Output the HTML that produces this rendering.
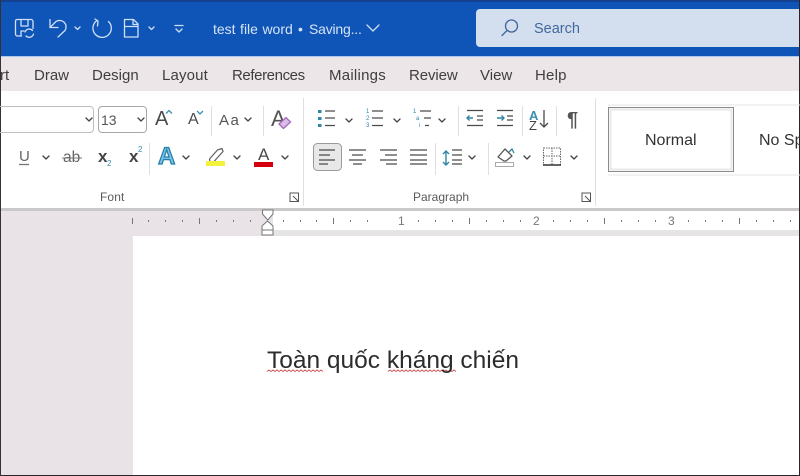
<!DOCTYPE html>
<html><head><meta charset="utf-8">
<style>
html,body{margin:0;padding:0;background:#fff}
#p{position:relative;width:800px;height:476px;overflow:hidden;background:#fff;font-family:"Liberation Sans",sans-serif;filter:blur(.35px)}
.a{position:absolute}
.t{position:absolute;white-space:nowrap;line-height:1}
.tab{top:68px;font-size:15px;color:#3f3d3f}
svg{position:absolute;left:0;top:0}
</style></head><body>
<div id="p">
<div class="a" style="left:0;top:0;width:800px;height:56px;background:#0f55b7"></div>
<div class="a" style="left:0;top:0;width:800px;height:2px;background:#14408f"></div>
<div class="a" style="left:0;top:56px;width:800px;height:1px;background:#a9c8ee"></div>
<div class="a" style="left:0;top:57px;width:800px;height:34px;background:#ece6e9"></div>
<div class="a" style="left:0;top:91px;width:800px;height:117px;background:#fff"></div>
<div class="a" style="left:0;top:208px;width:800px;height:3px;background:#cbc8ca"></div>
<div class="a" style="left:0;top:211px;width:800px;height:265px;background:#e9e3e7"></div>
<div class="a" style="left:133px;top:236px;width:667px;height:240px;background:#fff"></div>
<div class="a" style="left:273px;top:211px;width:527px;height:19px;background:#fff"></div>
<div class="a" style="left:273px;top:230px;width:527px;height:6px;background:#e7e4e6"></div>
<div class="a" style="left:476px;top:9px;width:330px;height:38px;border-radius:4px;background:#d3dfef"></div>
<div class="a" style="left:0;top:475px;width:800px;height:1px;background:#2a2528"></div>
<div class="a" style="left:0;top:0;width:1px;height:476px;background:#3a3034"></div>
<div class="a" style="left:799px;top:0;width:1px;height:476px;background:#2a2528"></div>

<div class="t" style="left:213px;top:22px;font-size:14px;color:#d5e3f6;word-spacing:.6px">test file word</div>
<div class="t" style="left:298px;top:22px;font-size:14px;color:#d5e3f6">•</div>
<div class="t" style="left:309px;top:22px;font-size:14px;color:#d5e3f6;letter-spacing:-.2px">Saving...</div>
<div class="t" style="left:534px;top:22px;font-size:14.5px;color:#41689c">Search</div>

<div class="t tab" style="left:0">rt</div>
<div class="t tab" style="left:34px">Draw</div>
<div class="t tab" style="left:92px">Design</div>
<div class="t tab" style="left:162px;letter-spacing:.15px">Layout</div>
<div class="t tab" style="left:232px;letter-spacing:-.4px">References</div>
<div class="t tab" style="left:329px;letter-spacing:.25px">Mailings</div>
<div class="t tab" style="left:409px;letter-spacing:-.1px">Review</div>
<div class="t tab" style="left:480px">View</div>
<div class="t tab" style="left:535px;letter-spacing:.2px">Help</div>

<div class="a" style="left:-6px;top:106px;width:100px;height:27px;border:1px solid #c0bdbf;border-radius:4px;box-sizing:border-box"></div>
<div class="a" style="left:98px;top:106px;width:49px;height:27px;border:1px solid #aaa7a9;border-radius:4px;box-sizing:border-box"></div>
<div class="t" style="left:101px;top:113px;font-size:14px;color:#555">13</div>

<div class="t" style="left:155px;top:109px;font-size:20px;color:#4a4a4a">A</div>
<div class="t" style="left:188px;top:112px;font-size:16px;color:#4a4a4a">A</div>
<div class="t" style="left:219px;top:113px;font-size:15px;color:#555;letter-spacing:1.5px">Aa</div>
<div class="t" style="left:271px;top:108px;font-size:22px;color:#555">A</div>
<div class="t" style="left:19px;top:149px;font-size:15px;color:#666">U</div>
<div class="t" style="left:63px;top:150px;font-size:15.500px;color:#666">ab</div>
<div class="t" style="left:98px;top:148px;font-size:17px;font-weight:bold;color:#444">x</div>
<div class="t" style="left:107px;top:160px;font-size:8px;color:#3a8fb0">2</div>
<div class="t" style="left:129px;top:148px;font-size:17px;font-weight:bold;color:#444">x</div>
<div class="t" style="left:138px;top:146px;font-size:8px;color:#3a8fb0">2</div>
<div class="t" style="left:158px;top:145px;font-size:24px;font-weight:bold;color:#7cc0e8;-webkit-text-stroke:1.200px #1f7fa8">A</div>
<div class="t" style="left:258px;top:146px;font-size:17px;color:#4a4a4a">A</div>
<div class="t" style="left:100px;top:191px;font-size:12px;color:#5a5a5a;letter-spacing:.1px">Font</div>
<div class="t" style="left:413px;top:191px;font-size:12px;color:#5a5a5a">Paragraph</div>
<div class="t" style="left:529px;top:109px;font-size:13px;font-weight:bold;color:#3a8fb0">A</div>
<div class="t" style="left:529px;top:119px;font-size:13px;color:#444">Z</div>
<div class="t" style="left:567px;top:110px;font-size:20px;font-weight:bold;color:#555">¶</div>
<div class="t" style="left:398px;top:215px;font-size:12px;color:#777">1</div>
<div class="t" style="left:533px;top:215px;font-size:12px;color:#777">2</div>
<div class="t" style="left:668px;top:215px;font-size:12px;color:#777">3</div>

<svg width="800" height="476" viewBox="0 0 800 476" fill="none">
<!-- title bar icons -->
<g stroke="#cfe0f5" stroke-width="1.300" stroke-linecap="round" stroke-linejoin="round">
<path d="M17 19.500h14a2 2 0 0 1 2 2v7M15.500 21v13a2 2 0 0 0 2 2h4M15.500 21a1.500 1.500 0 0 1 1.500-1.500M21 20v6h7v-6M21 36v-5h3"/>
<path d="M25 32a4.500 4.500 0 0 1 7.500-1.500M33.500 34a4.500 4.500 0 0 1-7.500 2"/>
<path d="M50 19.500v8h8M50 27.500l6-6a6.500 6.500 0 0 1 9 9l-7 6.500"/>
<path d="M75 27l2.500 2.500 2.500-2.500M149 27l2.500 2.500 2.500-2.500"/>
<path d="M108.500 21.500A9.200 9.200 0 1 1 97 20.500M95 19l3 2-.500 5"/>
<path d="M124.500 19.500h9l4.500 4.500v13h-13.500zM133 19.500v5h5M124.500 26.500h13.500"/>
<path d="M175 25.500h8M176 29l3 3 3-3"/>
<path d="M367 25l6 6 6-6"/>
</g>
<g stroke="#3f6598" stroke-width="1.300" stroke-linecap="round"><circle cx="511.500" cy="26" r="6"/><path d="M507 30.500l-5 5"/></g>
<!-- dividers -->
<g stroke="#e0dedf" stroke-width="1">
<path d="M211.500 106v30M263.500 106v30M149.500 143v32M303.500 98v108M458.500 106v30M522.500 106v30M556.500 106v30M435.500 143v32M488.500 143v32M595.500 98v108"/>
</g>
<!-- chevrons -->
<g stroke="#444" stroke-width="1.300" stroke-linecap="round" stroke-linejoin="round">
<path d="M86 118l3 3 3-3M138 118l3 3 3-3M245 118l3 3 3-3M43 156l3 3 3-3M183 156l3 3 3-3M234 156l3 3 3-3M282 156l3 3 3-3"/>
<path d="M346 119l3 3 3-3M394 119l3 3 3-3M439 119l3 3 3-3M469 156l3 3 3-3M524 156l3 3 3-3M571 156l3 3 3-3"/>
</g>
<path d="M166 113.500l3-3 3 3" stroke="#3a8fb0" stroke-width="1.300"/>
<path d="M197 111l3 3 3-3" stroke="#3a8fb0" stroke-width="1.300"/>
<path d="M279 124l7-6.500 4.500 4.500-7 6.500z" fill="#dcbcea" stroke="#a06ab8" stroke-width="1.300"/>
<!-- underline / strike -->
<path d="M19 164.500h10" stroke="#777" stroke-width="1.300"/>
<path d="M62 158h20" stroke="#777" stroke-width="1.100"/>
<!-- highlight -->
<path d="M209.500 159l8-9 4.500-1.500 1 3-9 10-4 .5z" stroke="#666" stroke-width="1.300" stroke-linejoin="round"/>
<rect x="206" y="161" width="19" height="5" fill="#f4f23c"/>
<rect x="254" y="162" width="19" height="5" fill="#d5000f"/>
<!-- paragraph icons -->
<g fill="#2f86a6"><rect x="318" y="110" width="3.500" height="3"/><rect x="318" y="117" width="3.500" height="3"/><rect x="318" y="124" width="3.500" height="3"/></g>
<g stroke="#4a4a4a" stroke-width="1.300">
<path d="M325 111h10M325 118h10M325 125.500h10"/>
<path d="M372 111h11M372 118h11M372 125.500h11"/>
<path d="M420 111h11M424 118h7M425 125.500h4"/>
<path d="M467 110.500h16M477 116h6M477 120h6M467 125.500h16"/>
<path d="M497 110.500h16M507 116h6M507 120h6M497 125.500h16"/>
<path d="M544 110v17M540 123l4 4 4-4"/>
</g>
<path d="M473 118h-6m2.500-2.500l-2.500 2.500 2.500 2.500M497 118h7m-2.500-2.500l2.500 2.500-2.500 2.500" stroke="#2f86a6" stroke-width="1.400"/>
<g fill="#2f86a6" font-size="6" font-family="Liberation Sans"><text x="366" y="113">1</text><text x="366" y="120">2</text><text x="366" y="127">3</text><text x="413" y="113">1</text><text x="416" y="120">a</text><text x="419" y="127">i</text></g>
<rect x="313.500" y="143.500" width="28" height="27" rx="4" fill="#e8e8e8" stroke="#9a9a9a"/>
<g stroke="#4a4a4a" stroke-width="1.300">
<path d="M319 150h16M319 155h11M319 160h16M319 164h9"/>
<path d="M349 150h17M352 155h11M349 160h17M353 164h9"/>
<path d="M380 150h17M385 155h12M380 160h17M386 164h11"/>
<path d="M410 150h17M410 155h17M410 160h17M410 164h17"/>
<path d="M452 150h10M452 155h10M452 160h10M452 164h10"/>
</g>
<path d="M446 151v14M443 154l3-3 3 3M443 162l3 3 3-3" stroke="#2f86a6" stroke-width="1.400"/>
<path d="M498 157l7-8 7 7-6 5-2 0z" stroke="#555" stroke-width="1.300" stroke-linejoin="round"/>
<path d="M509 152l3-3 2 4" stroke="#2f86a6" stroke-width="1.300"/>
<rect x="495.500" y="162.500" width="18" height="4" fill="#fff" stroke="#aaa"/>
<path d="M543.500 148h17v17h-17zM552 148v17M543.500 156h17" stroke="#666" stroke-dasharray="1.500 1"/>
<path d="M543 165h18" stroke="#333" stroke-width="1.500"/>
<!-- launchers -->
<g stroke="#555" stroke-width="1"><path d="M290 193h8.500v8.500h-8.500zM293 196l5.500 5.500M298.500 198v3.500h-3.500"/><path d="M582 193h8.500v8.500h-8.500zM585 196l5.500 5.500M590.500 198v3.500h-3.500"/></g>
<!-- style gallery -->
<path d="M608 105H800M608 175H800" stroke="#e6e4e5"/>
<rect x="608.500" y="107.500" width="125" height="64" fill="#fff" stroke="#8a8a8a"/>
<rect x="610.500" y="109.500" width="121" height="60" stroke="#e8e8e8" stroke-width="2"/>
<!-- ruler ticks -->
<g stroke="#777" stroke-width="1">
<path d="M132.500 218v6M199.500 218v6M333.500 218v6M469.500 218v6M604.500 218v6M739.500 218v6"/>
<path d="M148.500 220v2M165.500 220v2M182.500 220v2M216.500 220v2M233.500 220v2M250.500 220v2M283.500 220v2M300.500 220v2M316.500 220v2M350.500 220v2M367.500 220v2M418.500 220v2M435.500 220v2M452.500 220v2M486.500 220v2M503.500 220v2M520.500 220v2M553.500 220v2M570.500 220v2M587.500 220v2M621.500 220v2M638.500 220v2M655.500 220v2M688.500 220v2M705.500 220v2M722.500 220v2M756.500 220v2M773.500 220v2M790.500 220v2"/>
</g>
<path d="M262.500 210h10.500v4l-5.250 6-5.250-6z" fill="#fff" stroke="#777"/>
<path d="M262 230v-4l5.500-5 5.500 5v4zM262 230h11v5h-11z" fill="#fff" stroke="#777"/>
<!-- spell squiggles -->
<path d="M267 371.500l2-1.500 2 1.500 2-1.500 2 1.500 2-1.500 2 1.500 2-1.500 2 1.500 2-1.500 2 1.500 2-1.500 2 1.500 2-1.500 2 1.500 2-1.500 2 1.500 2-1.500 2 1.500 2-1.500 2 1.500 2-1.500 2 1.500 2-1.500 2 1.500 2-1.500 2 1.500 2-1.500 2 1.500" stroke="#d06060" stroke-width="1"/>
<path d="M388 371.500l2-1.500 2 1.500 2-1.500 2 1.500 2-1.500 2 1.500 2-1.500 2 1.500 2-1.500 2 1.500 2-1.500 2 1.500 2-1.500 2 1.500 2-1.500 2 1.500 2-1.500 2 1.500 2-1.500 2 1.500 2-1.500 2 1.500 2-1.500 2 1.500 2-1.500 2 1.500 2-1.500 2 1.500 2-1.500 2 1.500 2-1.500 2 1.500 2-1.500 2 1.500" stroke="#d06060" stroke-width="1"/>
</svg>
<div class="t" style="left:645px;top:133px;font-size:16px;color:#333">Normal</div>
<div class="t" style="left:759px;top:133px;font-size:16px;color:#333">No Sp</div>
<div class="t" style="left:267px;top:349px;font-size:24.500px;color:#2c2c2c;font-family:'Liberation Sans','DejaVu Sans',sans-serif">Toàn quốc kháng chiến</div>
</div>
</body></html>
